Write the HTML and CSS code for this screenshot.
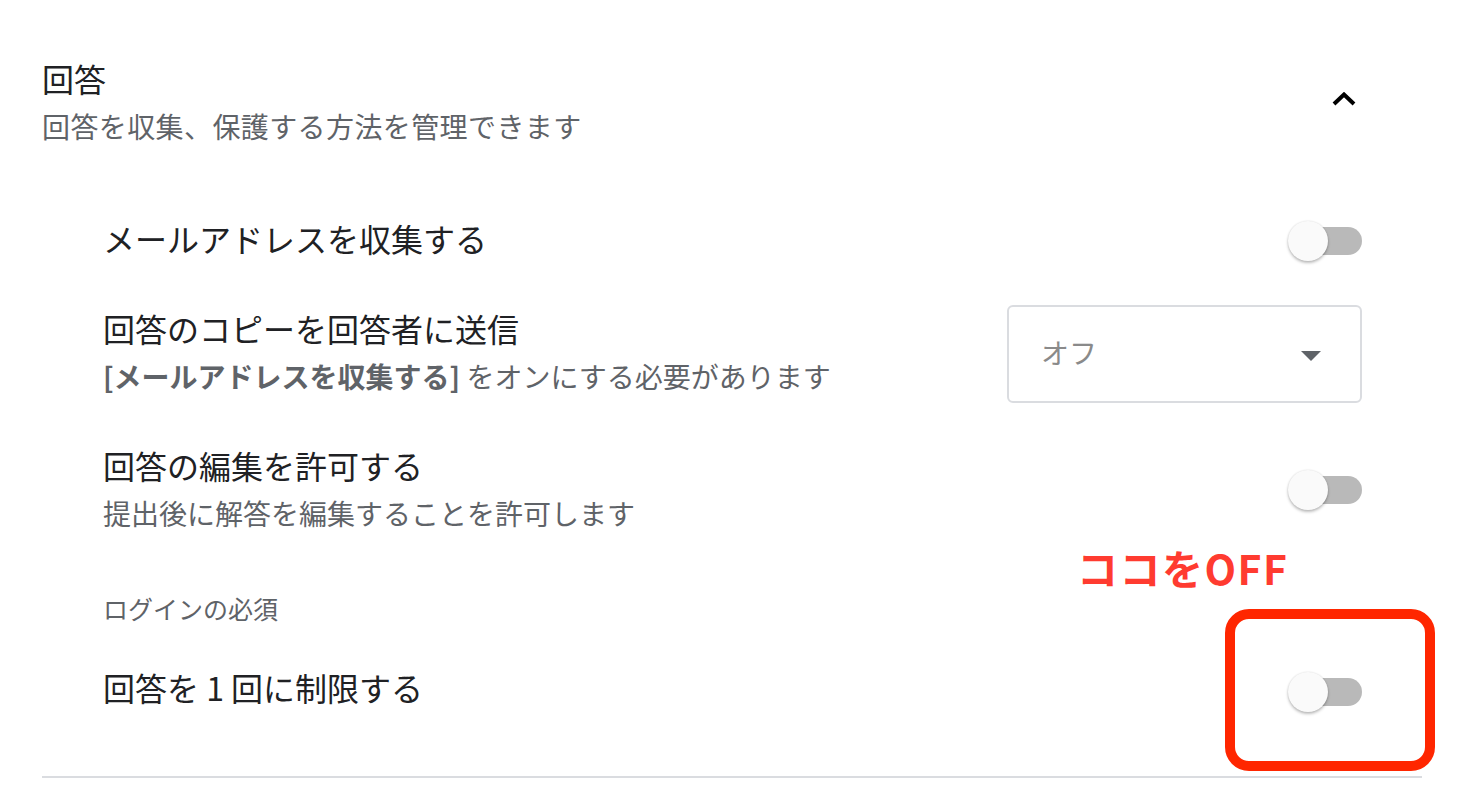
FILE: index.html
```html
<!DOCTYPE html>
<html>
	<head>
		<meta charset = 'UTF-8' />
		<meta name = 'viewport' content='width=device-width, initial-scale=1'>
        <title> 回答の設定 </title>
        <link rel="stylesheet" href="styles.css">
	</head>
	<body>
		<div class='mainpage'>
            <div class='header'>
                <div class='header_text'>
                    <div class='title'>回答</div>
                    <div class='subtitle'>回答を収集、保護する方法を管理できます</div>
                </div>
                <div class='chevron'>
                    <svg width="24" height="14" viewBox="0 0 24 14">
                        <path d="M2 12 L12 2.5 L22 12" fill="none" stroke="#000" stroke-width="4"/>
                    </svg>
                </div>
            </div>

            <div class='settings'>
                <div class='row row1'>
                    <div class='label'>メールアドレスを収集する</div>
                    <div class='switch'><span class='track'></span><span class='thumb'></span></div>
                </div>

                <div class='row row2'>
                    <div class='label_block'>
                        <div class='label'>回答のコピーを回答者に送信</div>
                        <div class='desc'><b>[メールアドレスを収集する]</b> をオンにする必要があります</div>
                    </div>
                    <div class='select'>
                        <span class='select_text'>オフ</span>
                        <span class='arrow'></span>
                    </div>
                </div>

                <div class='row row3'>
                    <div class='label_block'>
                        <div class='label'>回答の編集を許可する</div>
                        <div class='desc'>提出後に解答を編集することを許可します</div>
                    </div>
                    <div class='switch switch_mid'><span class='track'></span><span class='thumb'></span></div>
                </div>

                <div class='section_label'>ログインの必須</div>

                <div class='row row4'>
                    <div class='label'>回答を 1 回に制限する</div>
                    <div class='switch switch_low'><span class='track'></span><span class='thumb'></span></div>
                </div>
            </div>

            <div class='divider'></div>

            <!-- 注釈 -->
            <div class='note'>ココをOFF</div>
            <div class='note_box'></div>
        </div>
	</body>
</html>
```

FILE: styles.css
```css
*{
    box-sizing: border-box;
}

body{
    margin: 0;
    background-color: white;
    font-family: "Noto Sans CJK JP", "Noto Sans", sans-serif;
    color: #202124;
}

.mainpage{
    position: relative;
    width: 1462px;
    height: 808px;
    padding: 54px 0 0 42px;
}

.header{
    width: 1380px;
    display: flex;
    justify-content: space-between;
    align-items: flex-start;
}

.title{
    font-size: 32px;
    line-height: 48px;
    color: #202124;
}

.subtitle{
    font-size: 28px;
    line-height: 48px;
    color: #5f6368;
    letter-spacing: 0.4px;
}

.chevron{
    width: 48px;
    height: 48px;
    margin: 21px 54px 0 0;
    display: flex;
    align-items: center;
    justify-content: center;
}

.settings{
    width: 1380px;
    padding: 0 60px 0 61px;
}

.row{
    display: flex;
    justify-content: space-between;
    align-items: center;
}

.row1{
    margin-top: 50px;
    height: 80px;
}

.row2{
    margin-top: 25px;
    height: 98px;
}

.row3{
    margin-top: 40px;
    height: 96px;
}

.row4{
    margin-top: 21px;
    height: 80px;
}

.label{
    font-size: 32px;
    line-height: 48px;
    color: #202124;
    padding-bottom: 4px;
}

.label_block .label{
    padding-bottom: 0;
}

.label_block{
    padding-bottom: 4px;
}

.desc{
    font-size: 28px;
    line-height: 48px;
    color: #5f6368;
}

.desc b{
    color: #5f6368;
}

.section_label{
    margin-top: 49px;
    font-size: 25px;
    line-height: 40px;
    color: #5f6368;
}

.switch{
    position: relative;
    width: 74px;
    height: 40px;
    margin-top: 2px;
}

.switch_mid{
    margin-top: 0;
    margin-bottom: 2px;
}

.switch_low{
    margin-top: 6px;
}

.track{
    position: absolute;
    right: 0;
    top: 6px;
    width: 72px;
    height: 28px;
    border-radius: 14px;
    background-color: #b9b9b9;
}

.thumb{
    position: absolute;
    left: 0;
    top: 0;
    width: 40px;
    height: 40px;
    border-radius: 50%;
    background-color: #fafafa;
    box-shadow: 0 2px 3px rgba(0, 0, 0, 0.25), 0 0 2px rgba(0, 0, 0, 0.12);
}

.select{
    width: 355px;
    height: 98px;
    border: 2px solid #dadce0;
    border-radius: 6px;
    padding: 0 39px 4px 32px;
    display: flex;
    justify-content: space-between;
    align-items: center;
}

.select_text{
    font-size: 28px;
    color: #8a8a8a;
}

.arrow{
    width: 0;
    height: 0;
    border-left: 10px solid transparent;
    border-right: 10px solid transparent;
    border-top: 10px solid #5f6368;
    margin-top: 8px;
}

.divider{
    margin-top: 47px;
    width: 1380px;
    height: 2px;
    background-color: #dadce0;
}

.note{
    position: absolute;
    left: 1077px;
    top: 541px;
    font-size: 41px;
    line-height: 52px;
    font-weight: bold;
    color: #ff3b30;
    letter-spacing: 1.5px;
}

.note_box{
    position: absolute;
    left: 1225px;
    top: 609px;
    width: 210px;
    height: 162px;
    border: 10px solid #ff2600;
    border-radius: 24px;
}
```
